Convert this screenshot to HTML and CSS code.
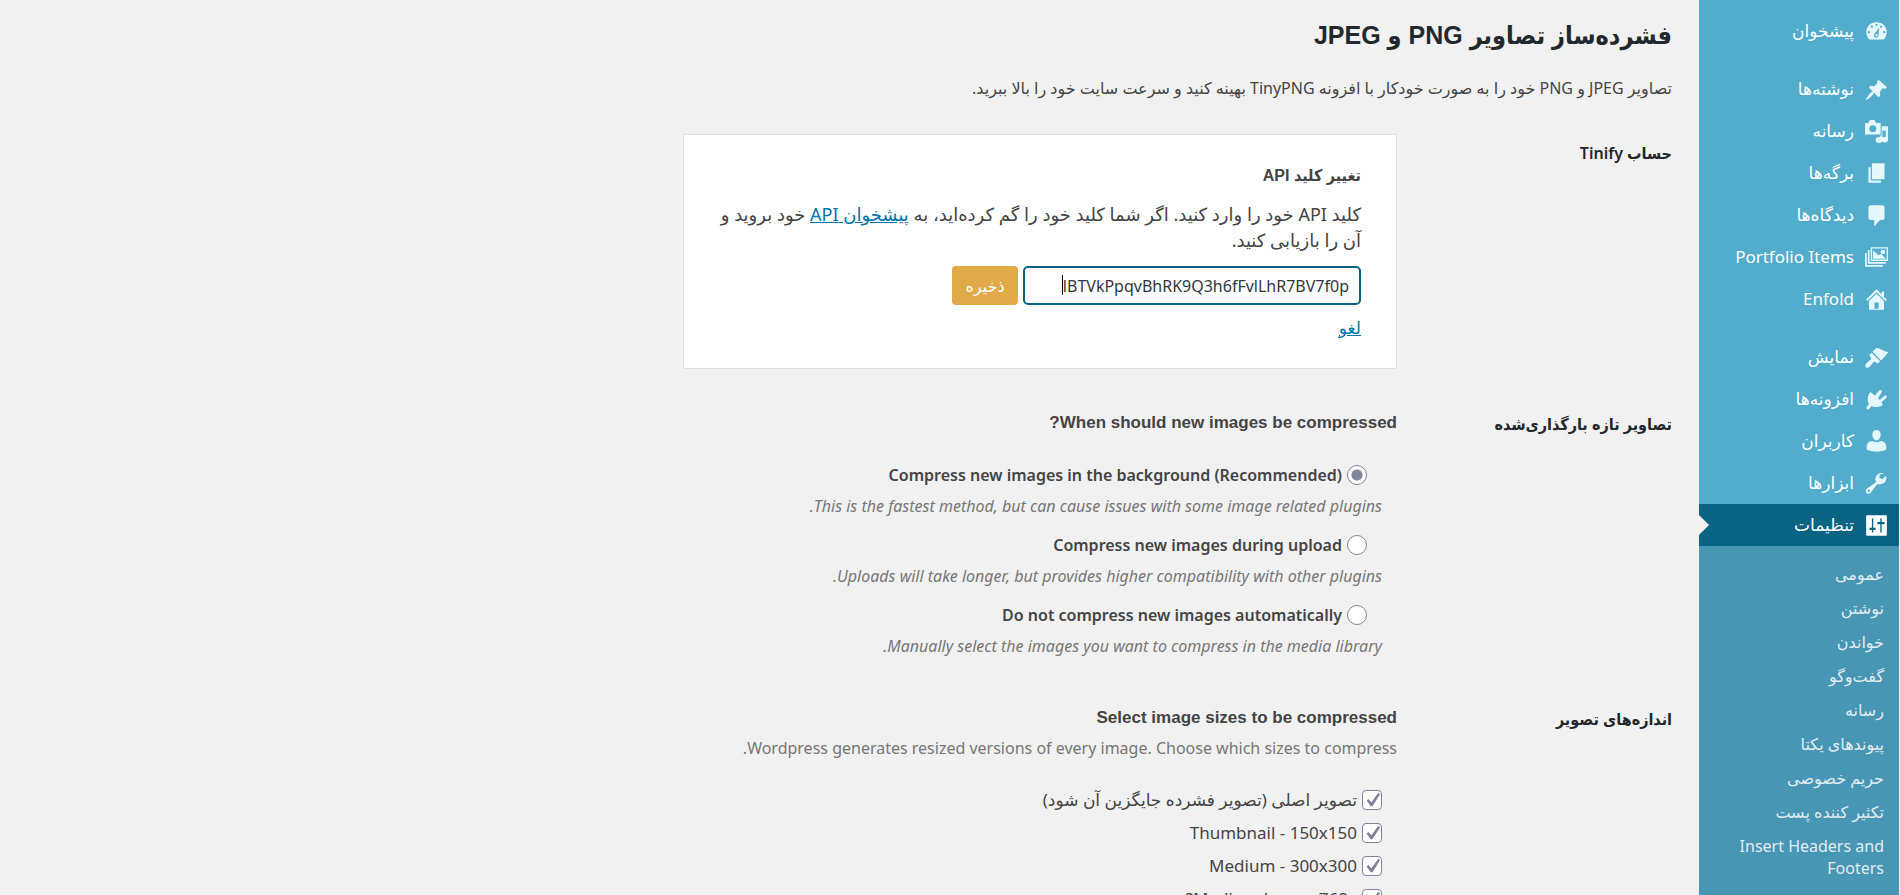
FILE: index.html
```html
<!DOCTYPE html>
<html lang="fa" dir="rtl">
<head>
  <meta charset="UTF-8">
  <title>فشرده‌ساز تصاویر PNG و JPEG</title>
  <link rel="stylesheet" href="styles.css">
</head>
<body>

  <nav class="sidebar">
    <ul class="menu">
      <li><a href="#">
        <svg viewBox="0 0 20 20"><path fill-rule="evenodd" d="M3.8 17h12.400c1.700-1.800 2.700-4.100 2.700-6.600 0-4.900-4-8.400-8.900-8.400s-8.900 3.500-8.900 8.400c0 2.500 1 4.800 2.700 6.600zM10 3.200a1 1 0 1 1 0 2 1 1 0 0 1 0-2zM6 4.800a1 1 0 1 1 0 2 1 1 0 0 1 0-2zM14 4.800a1 1 0 1 1 0 2 1 1 0 0 1 0-2zM3.300 9.600a1 1 0 1 1 0 2 1 1 0 0 1 0-2zM16.700 9.600a1 1 0 1 1 0 2 1 1 0 0 1 0-2zM12.300 6.800l-.5 6.500a2 2 0 1 1-3.400-1.300zM10 12.300a1 1 0 1 0 0 2 1 1 0 0 0 0-2z"/></svg>
        پیشخوان</a></li>
      <li class="gap"><a href="#">
        <svg viewBox="0 0 20 20"><path d="M10.400 3l1.500-1.500 7.200 6.500-1.600 1.400-2-.4-2.600 3 .4 3.200-1.600 1.500-3.700-3.600c-1.500 2-4.400 5.200-7.300 6.200.9-2.900 4-6.500 5.900-7.700L3.300 8.200l1.500-1.500 3.300.4 2.700-2.700z"/></svg>
        نوشته‌ها</a></li>
      <li><a href="#">
        <svg viewBox="0 0 20 20"><path fill-rule="evenodd" d="M0 2.500h3L4.300 0h4l1.300 2.500h4V12.500H0zM6.800 4.500a3 3 0 1 0 0 6 3 3 0 0 0 0-6z"/><path d="M14.500 5.500H20v12a2.800 2.400 0 1 1-2-2.600V9.200h-2.800v8.500a3 2.500 0 1 1-2-2.600V13.500h1.300z"/></svg>
        رسانه</a></li>
      <li><a href="#">
        <svg viewBox="0 0 20 20"><path d="M6 1h11v14H6zM3 4.500h2V16h9v2H3z"/></svg>
        برگه‌ها</a></li>
      <li><a href="#">
        <svg viewBox="0 0 20 20"><path d="M5 1h10q2 0 2 2v9q0 2-2 2h-2l-5 5.500V14H5q-2 0-2-2V3q0-2 2-2z"/></svg>
        دیدگاه‌ها</a></li>
      <li><a href="#">
        <svg viewBox="0 0 20 20"><path fill-rule="evenodd" d="M5 1h15v12H5zM6.200 2.200v9.600h12.600V2.200zM15.500 3.200a2 2 0 1 1 0 4 2 2 0 0 1 0-4zM7 4l5 4 2-1 4 4H7zM2.500 3.500h1.500v10.500h14v1.500H2.500zM0 6h1.500v10.500h14V18H0z"/></svg>
        Portfolio Items</a></li>
      <li><a href="#">
        <svg viewBox="0 0 20 20"><path fill-rule="evenodd" d="M16.500 7.500V3h-2v2.500L10 1 .8 10.200l1.200 1.200 8-7.800 8 7.800 1.200-1.200zM10 5L3.500 11.400V19h13v-7.600zM8.200 12.500h3.600v5.500H8.200z"/></svg>
        Enfold</a></li>
      <li class="gap"><a href="#">
        <svg viewBox="0 0 20 20"><path d="M10 1.500c3 .4 6.500 3.500 10.500 3.800L14 12.500 6.500 5zM5.700 5.800l7.500 7.500-2 2-2.700-1.500c-1.200-.3-2 1.500-4 3.700-1.500 1.500-2.700 1.800-3.800 1-.9-1-.7-2.300.8-3.800 2.300-2 4-2.700 3.800-4L3.800 7.700z"/></svg>
        نمایش</a></li>
      <li><a href="#">
        <svg viewBox="0 0 20 20"><path d="M4.600 3.500l4 3.300 4-4.800q2.300-1 2.200 1.300L11.300 9l1.600 1.500 4.200-4q2.300-.6 1.600 1.900l-4.300 4 1 2.300c-2.500 2-7 2.500-9.800 1L3.400 18.500q-2 1.200-2.200-1.500L3.500 14C1.500 10.500 2.500 6 4.600 3.500z"/></svg>
        افزونه‌ها</a></li>
      <li><a href="#">
        <svg viewBox="0 0 20 20"><path d="M10 0c2.400 0 3.800 2 3.600 4.400-.2 2.600-1.700 4.700-3.600 4.700S6.600 7 6.400 4.400C6.200 2 7.600 0 10 0zM6.500 9.500q3.500 2.500 7 0c4 .3 5.500 3 5 7.500-4 2.500-13 2.500-17 0-.5-4.500 1-7.200 5-7.500z"/></svg>
        کاربران</a></li>
      <li><a href="#">
        <svg viewBox="0 0 20 20"><path fill-rule="evenodd" d="M16.700 1.400c-2.400-1.200-5.500-.4-6.900 2-1 1.700-1 3.700-.2 5.400L1.700 14.500c-1.300 1-1.300 2.600-.4 3.700 1.100 1.100 2.900 1 3.800-.3l5.800-7.400c2.600.8 5.600-.2 7-2.600.9-1.500.9-3.200.3-4.600L15 6.200l-2.500-1.300.3-2.700zM3.300 15.300a1 1 0 1 1 0 2 1 1 0 0 1 0-2z"/></svg>
        ابزارها</a></li>
      <li class="current"><a href="#">
        <svg viewBox="0 0 20 20"><path fill-rule="evenodd" d="M2 1h16q1 0 1 1v16q0 1-1 1H2q-1 0-1-1V2q0-1 1-1zM6 4v8H4v2h2v2h1.200v-2h2v-2h-2V4zM13.300 4v3h-2.500v2h2.500v7h1.200V9H17V7h-2.500V4z"/></svg>
        تنظیمات</a></li>
    </ul>
    <ul class="submenu">
      <li><a href="#">عمومی</a></li>
      <li><a href="#">نوشتن</a></li>
      <li><a href="#">خواندن</a></li>
      <li><a href="#">گفت‌وگو</a></li>
      <li><a href="#">رسانه</a></li>
      <li><a href="#">پیوندهای یکتا</a></li>
      <li><a href="#">حریم خصوصی</a></li>
      <li><a href="#">تکثیر کننده پست</a></li>
      <li><a href="#">Insert Headers and Footers</a></li>
    </ul>
  </nav>

  <main class="content">
    <h1>فشرده‌ساز تصاویر PNG و JPEG</h1>
    <p class="intro">تصاویر JPEG و PNG خود را به صورت خودکار با افزونه TinyPNG بهینه کنید و سرعت سایت خود را بالا ببرید.</p>

    <form>
      <section class="row">
        <h2>حساب Tinify</h2>
        <div class="card">
          <h3>تغییر کلید API</h3>
          <label for="apiKey">کلید API خود را وارد کنید. اگر شما کلید خود را گم کرده‌اید، به <a href="#">پیشخوان API</a> خود بروید و آن را بازیابی کنید.</label>
          <div class="key">
            <div class="key-box">
              <input type="text" id="apiKey" value="lBTVkPpqvBhRK9Q3h6fFvlLhR7BV7f0p">
              <span class="caret"></span>
            </div>
            <button type="button" class="btn">ذخیره</button>
          </div>
          <a class="cancel" href="#">لغو</a>
        </div>
      </section>

      <section class="row">
        <h2>تصاویر تازه بارگذاری‌شده</h2>
        <div class="field">
          <h3>When should new images be compressed?</h3>
          <div class="methods">
            <label><input type="radio" name="method" checked>Compress new images in the background (Recommended)</label>
            <p>This is the fastest method, but can cause issues with some image related plugins.</p>
            <label><input type="radio" name="method">Compress new images during upload</label>
            <p>Uploads will take longer, but provides higher compatibility with other plugins.</p>
            <label><input type="radio" name="method">Do not compress new images automatically</label>
            <p>Manually select the images you want to compress in the media library.</p>
          </div>
        </div>
      </section>

      <section class="row">
        <h2>اندازه‌های تصویر</h2>
        <div class="field">
          <h3>Select image sizes to be compressed</h3>
          <p class="hint">Wordpress generates resized versions of every image. Choose which sizes to compress.</p>
          <div class="sizes">
            <label><input type="checkbox" checked>تصویر اصلی (تصویر فشرده جایگزین آن شود)</label>
            <label><input type="checkbox" checked>Thumbnail - 150x150</label>
            <label><input type="checkbox" checked>Medium - 300x300</label>
            <label><input type="checkbox" checked>Medium large - 768x?</label>
          </div>
        </div>
      </section>
    </form>
  </main>

</body>
</html>
```
FILE: styles.css
```css
* {
  box-sizing: border-box;
}

body {
  margin: 0;
  display: flex;
  height: 100vh;
  overflow: hidden;
  font-family: "Noto Sans", "DejaVu Sans", sans-serif;
  font-size: 16px;
  line-height: 26px;
  color: #444;
  background: #f1f1f1;
}

h1, h2, h3, p, ul {
  margin: 0;
  padding: 0;
}

ul {
  list-style: none;
}

a {
  color: #0073aa;
}

.sidebar {
  flex: none;
  width: 200px;
  margin-right: 1px;
  background: #4796b3;
}

.menu {
  padding-top: 10px;
  background: #52accc;
}

.menu a {
  display: flex;
  align-items: center;
  gap: 11px;
  height: 42px;
  padding: 0 11px;
  font-size: 17px;
  color: #fff;
  text-decoration: none;
}

.menu svg {
  width: 23px;
  height: 23px;
  fill: #e5f8ff;
}

.menu .gap {
  margin-top: 16px;
}

.menu .current {
  position: relative;
  background: #096484;
}

.menu .current svg {
  fill: #fff;
}

.menu .current::after {
  content: "";
  position: absolute;
  left: 0;
  top: 11px;
  border: 10px solid transparent;
  border-left-color: #f1f1f1;
}

.submenu {
  padding: 11px 15px;
}

.submenu a {
  display: block;
  padding: 6px 0;
  line-height: 22px;
  color: #e2ecf1;
  text-decoration: none;
}

.content {
  flex: 1;
  padding: 13px 27px;
}

h1 {
  font: bold 25px/44px "Liberation Sans", "DejaVu Sans Condensed", sans-serif;
  color: #23282d;
}

.intro {
  margin: 18px 0 33px;
}

.row {
  display: flex;
  align-items: flex-start;
  margin-bottom: 36px;
}

h2 {
  width: 275px;
  padding-top: 6px;
  font: 600 16px/26px "Noto Sans", "DejaVu Sans Condensed", sans-serif;
  color: #23282d;
}

h3 {
  font: bold 17px/26px "Liberation Sans", "DejaVu Sans Condensed", sans-serif;
}

.card {
  flex: 0 1 714px;
  padding: 28px 35px 27px;
  background: #fff;
  border: 1px solid #e1e1e1;
}

.card h3 {
  font-size: 16px;
}

.card label {
  display: block;
  margin-top: 12px;
  font-size: 18px;
}

.key {
  display: flex;
  gap: 5px;
  margin: 13px 0 10px;
}

.key-box {
  position: relative;
}

.key input {
  width: 338px;
  height: 39px;
  padding: 0 10px;
  border: 2px solid #096484;
  border-radius: 5px;
  font: inherit;
  color: #32373c;
}

.caret {
  position: absolute;
  top: 9px;
  right: 298px;
  width: 1px;
  height: 20px;
  background: #000;
}

.btn {
  width: 66px;
  background: #e1a948;
  border: none;
  border-radius: 4px;
  font: inherit;
  color: #fff;
}

.cancel {
  font-size: 17px;
}

.field {
  padding-top: 5px;
}

.methods {
  padding: 26px 15px 0;
}

.methods label {
  display: flex;
  align-items: center;
  gap: 5px;
  padding-right: 15px;
  font-weight: 600;
}

.methods p {
  margin: 5px 0 13px;
  font-style: italic;
  color: #777;
}

.methods p:last-child {
  margin-bottom: 5px;
}

.hint {
  margin-top: 4px;
  font-size: 16px;
  color: #777;
}

.sizes {
  padding: 26px 15px 0;
}

.sizes label {
  display: flex;
  align-items: center;
  gap: 5px;
  margin-bottom: 7px;
  font-size: 17px;
}

input[type="radio"],
input[type="checkbox"] {
  appearance: none;
  width: 20px;
  height: 20px;
  margin: 0;
  border: 1px solid #7e8499;
  border-radius: 4px;
  background: #fff;
}

input[type="radio"] {
  border-radius: 50%;
}

input[type="radio"]:checked {
  background: radial-gradient(circle, #7e8499 5px, #fff 6px);
}

input[type="checkbox"]:checked {
  background: #fff url("data:image/svg+xml,%3Csvg xmlns='http://www.w3.org/2000/svg' viewBox='0 0 20 20'%3E%3Cpath fill='%237e8499' d='M17 2l2 1.500L10.500 17H8.500L4 10.500l2-1.500 3.300 3.500z'/%3E%3C/svg%3E");
}
```
